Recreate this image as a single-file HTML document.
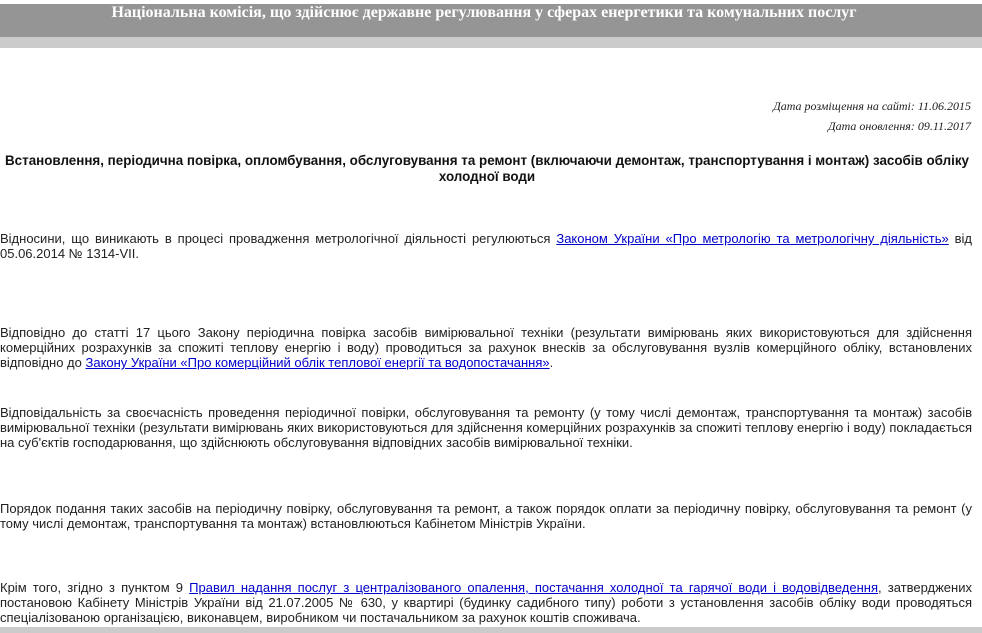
<!DOCTYPE html>
<html><head><meta charset="utf-8"><style>
body{margin:0;width:982px;height:633px;overflow:hidden;background:#fff;position:relative;font-family:"Liberation Sans",Arial,sans-serif;font-size:13px;color:#222;}
.hd{position:absolute;left:0;top:4px;width:982px;height:33px;background:#959595;}
.hd2{position:absolute;left:0;top:37px;width:982px;height:11px;background:#cbcbcb;}
.ttl{position:absolute;left:0;width:968px;top:4px;text-align:center;color:#fff;font:bold 16px "Liberation Serif",serif;}
.dt{position:absolute;right:11px;font:italic 12px "Liberation Serif",serif;color:#222;text-align:right;}
.h{position:absolute;left:0;width:974px;top:153px;text-align:center;font-weight:bold;font-size:13.4px;line-height:16px;color:#111;}
p{position:absolute;left:0;width:972px;margin:0;text-align:justify;line-height:15px;}
a{color:#00c;}
.ft{position:absolute;left:0;top:627px;width:982px;height:6px;background:#cbcbcb;}
</style></head><body>
<div class="hd"></div><div class="hd2"></div>
<div class="ttl">Національна комісія, що здійснює державне регулювання у сферах енергетики та комунальних послуг</div>
<div class="dt" style="top:99px">Дата розміщення на сайті: 11.06.2015</div>
<div class="dt" style="top:119px">Дата оновлення: 09.11.2017</div>
<div class="h">Встановлення, періодична повірка, опломбування, обслуговування та ремонт (включаючи демонтаж, транспортування і монтаж) засобів обліку холодної води</div>
<p style="top:231px">Відносини, що виникають в процесі провадження метрологічної діяльності регулюються <a href="#">Законом України «Про метрологію та метрологічну діяльність»</a> від 05.06.2014 № 1314-VII.</p>
<p style="top:325px">Відповідно до статті 17 цього Закону періодична повірка засобів вимірювальної техніки (результати вимірювань яких використовуються для здійснення комерційних розрахунків за спожиті теплову енергію і воду) проводиться за рахунок внесків за обслуговування вузлів комерційного обліку, встановлених відповідно до <a href="#">Закону України «Про комерційний облік теплової енергії та водопостачання»</a>.</p>
<p style="top:405px">Відповідальність за своєчасність проведення періодичної повірки, обслуговування та ремонту (у тому числі демонтаж, транспортування та монтаж) засобів вимірювальної техніки (результати вимірювань яких використовуються для здійснення комерційних розрахунків за спожиті теплову енергію і воду) покладається на суб'єктів господарювання, що здійснюють обслуговування відповідних засобів вимірювальної техніки.</p>
<p style="top:501px">Порядок подання таких засобів на періодичну повірку, обслуговування та ремонт, а також порядок оплати за періодичну повірку, обслуговування та ремонт (у тому числі демонтаж, транспортування та монтаж) встановлюються Кабінетом Міністрів України.</p>
<p style="top:580px">Крім того, згідно з пунктом 9 <a href="#">Правил надання послуг з централізованого опалення, постачання холодної та гарячої води і водовідведення</a>, затверджених постановою Кабінету Міністрів України від 21.07.2005 № 630, у квартирі (будинку садибного типу) роботи з установлення засобів обліку води проводяться спеціалізованою організацією, виконавцем, виробником чи постачальником за рахунок коштів споживача.</p>
<div class="ft"></div>
</body></html>
